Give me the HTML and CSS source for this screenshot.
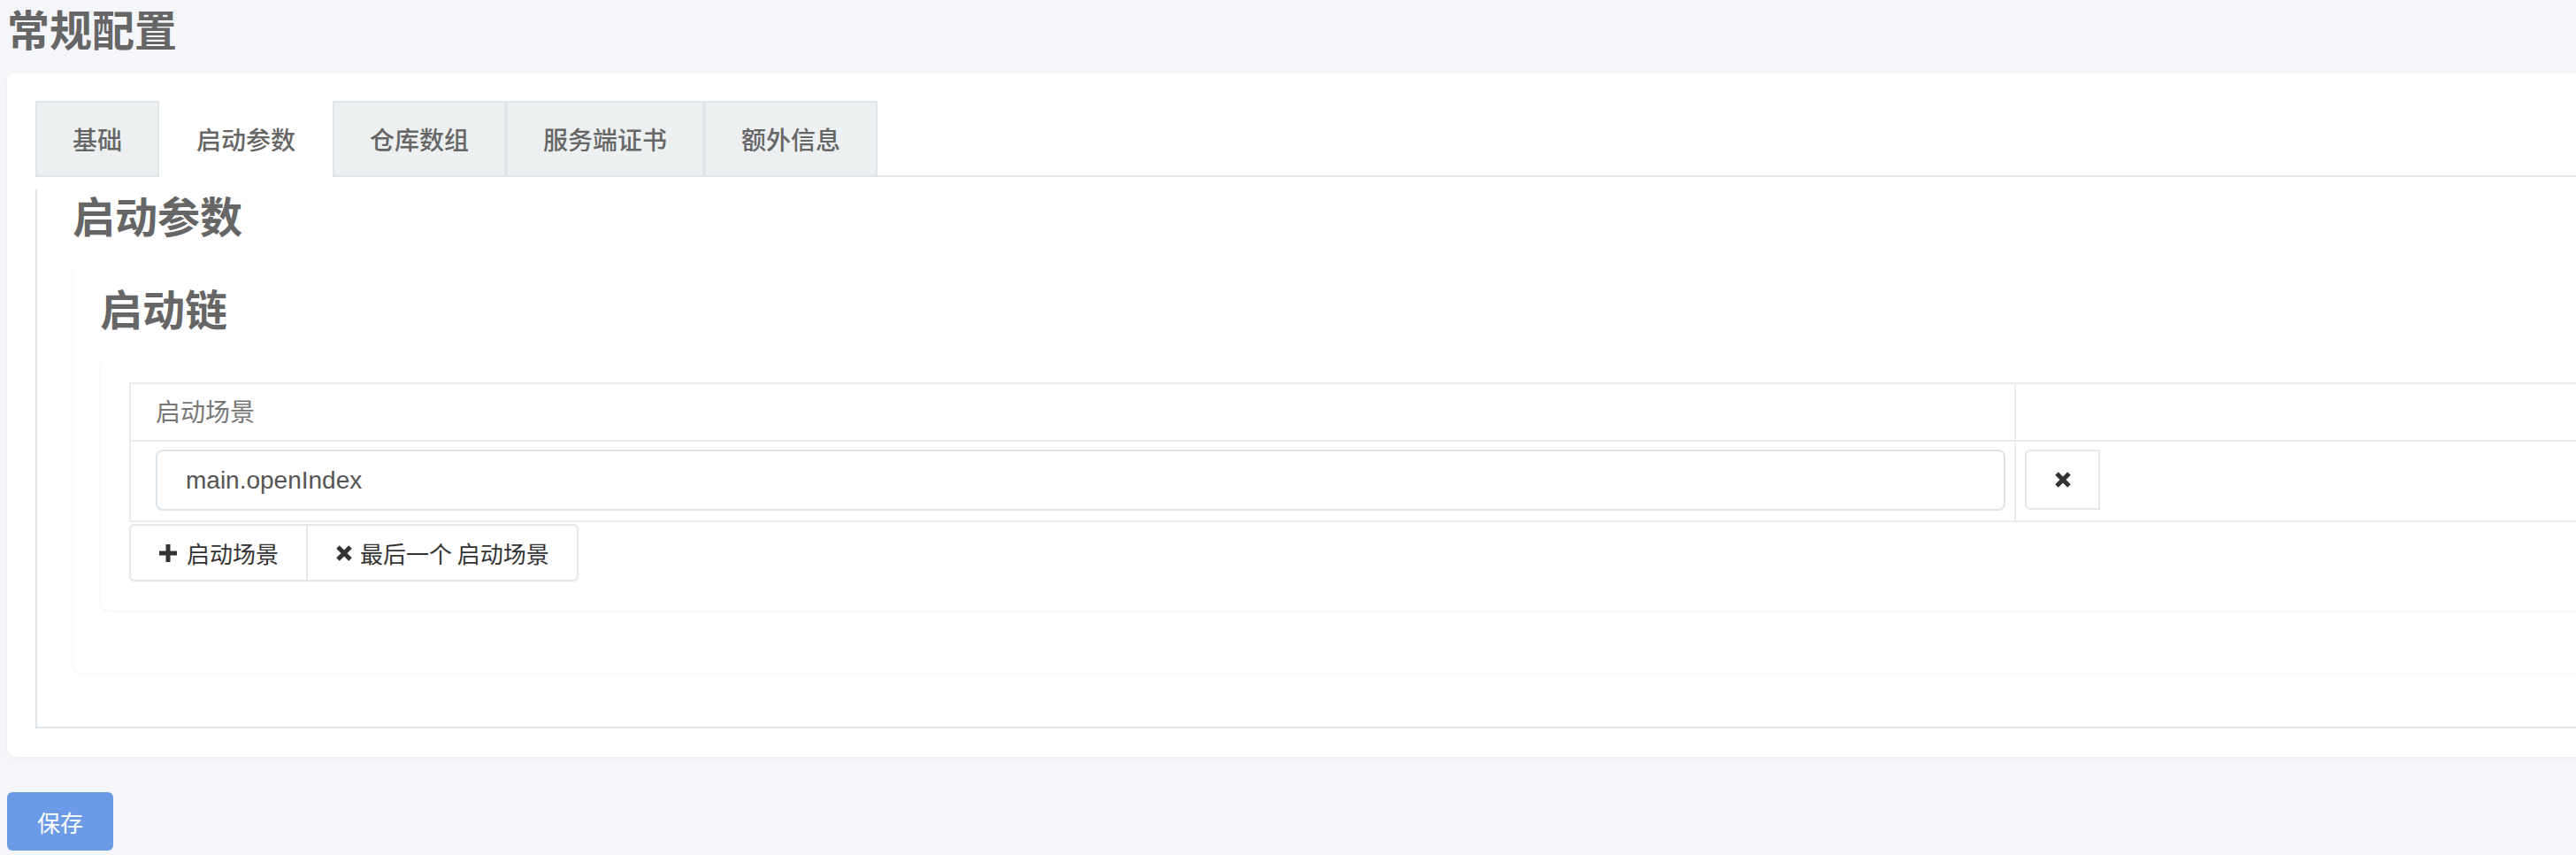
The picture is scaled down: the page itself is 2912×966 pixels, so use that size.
FILE: index.html
```html
<!DOCTYPE html>
<html lang="zh-CN">
<head>
<meta charset="utf-8">
<title>常规配置</title>
<link rel="stylesheet" href="styles.css">
</head>
<body>
<div class="page">
  <h1 class="page-title">常规配置</h1>
  <div class="main-card">
    <ul class="tab-list">
      <li class="tab">基础</li>
      <li class="tab active">启动参数</li>
      <li class="tab">仓库数组</li>
      <li class="tab">服务端证书</li>
      <li class="tab">额外信息</li>
    </ul>
    <div class="tab-panel">
      <h2 class="section-title">启动参数</h2>
      <div class="sub-card">
        <h2 class="section-title sub-title">启动链</h2>
        <div class="inner-card">
          <table class="grid">
            <colgroup>
              <col class="col-main">
              <col>
            </colgroup>
            <thead>
              <tr><th>启动场景</th><th></th></tr>
            </thead>
            <tbody>
              <tr>
                <td class="cell-input"><input class="text-input" type="text" value="main.openIndex"></td>
                <td class="cell-action">
                  <button class="del-btn" type="button">
                    <svg class="icon-x-sm" viewBox="0 0 24 24" width="24" height="24"><path d="M5 5 L19 19 M19 5 L5 19" stroke="#333" stroke-width="5" fill="none"/></svg>
                  </button>
                </td>
              </tr>
            </tbody>
          </table>
          <div class="btn-group">
            <button class="btn btn-first" type="button">
              <svg class="icon-plus" viewBox="0 0 26 26" width="26" height="26"><rect x="3" y="10.5" width="20" height="5" fill="#333"/><rect x="10.5" y="3" width="5" height="20" fill="#333"/></svg>启动场景
            </button>
            <button class="btn btn-last" type="button">
              <svg class="icon-x" viewBox="0 0 24 24" width="24" height="24"><path d="M5 5 L19 19 M19 5 L5 19" stroke="#333" stroke-width="5" fill="none"/></svg>最后一个 启动场景
            </button>
          </div>
        </div>
      </div>
    </div>
  </div>
  <button class="save-btn" type="button">保存</button>
</div>
</body>
</html>
```

FILE: styles.css
```css
html, body {
  margin: 0;
  padding: 0;
  overflow: hidden;
  background: #f5f6fa;
}

body {
  font-family: "Noto Sans CJK SC", sans-serif;
  color: #666;
}

.page {
  width: 3600px;
  box-sizing: border-box;
  padding: 3px 8px 0;
}

.page-title {
  margin: 0 0 23px;
  font-size: 48px;
  line-height: 56px;
  font-weight: 700;
  color: #666;
}

.main-card {
  background: #fff;
  border-radius: 10px;
  padding: 32px;
  box-shadow: 0 1px 3px rgba(0, 0, 0, 0.06);
}

.tab-list {
  display: flex;
  align-items: flex-start;
  list-style: none;
  margin: 0;
  padding: 0;
  border-bottom: 2px solid #dfe5e8;
}

.tab {
  height: 82px;
  line-height: 82px;
  padding: 0 40px;
  border: 2px solid #dfe5e8;
  border-bottom: 0;
  background: #ecf0f1;
  font-size: 28px;
  font-weight: 500;
  color: #666;
}

.tab.active {
  background: #fff;
  border-color: #fff;
  height: 84px;
  margin-bottom: -2px;
}

.tab-panel {
  border: 2px solid #dfe5e8;
  border-top: 0;
  padding: 0 40px 60px;
}

.section-title {
  margin: 14px 0 28px;
  font-size: 48px;
  line-height: 56px;
  font-weight: 700;
  color: #666;
}

.sub-card {
  border: 1px solid #fbfbfb;
  border-radius: 10px;
  box-shadow: 0 1px 3px rgba(0, 0, 0, 0.05);
  padding: 20px 30px 70px;
}

.sub-title {
  margin: 0 0 30px;
}

.inner-card {
  border: 1px solid #fbfbfb;
  border-radius: 10px;
  box-shadow: 0 1px 3px rgba(0, 0, 0, 0.05);
  padding: 26px 32px 32px;
}

.grid {
  width: 100%;
  table-layout: fixed;
  border-collapse: separate;
  border-spacing: 0;
  border-top: 2px solid #ebebeb;
  border-left: 2px solid #ebebeb;
}

.col-main {
  width: 2131px;
}

.grid th,
.grid td {
  border-right: 2px solid #ebebeb;
  border-bottom: 2px solid #ebebeb;
}

.grid th {
  padding: 10px 28px 13px;
  line-height: 40px;
  font-size: 28px;
  font-weight: 400;
  color: #777;
  text-align: left;
}

.cell-input {
  padding: 9px 10px 11px 28px;
}

.cell-action {
  padding: 9px 10px 11px;
  vertical-align: top;
}

.text-input {
  display: block;
  width: 100%;
  height: 69px;
  box-sizing: border-box;
  border: 2px solid #dde4ea;
  border-radius: 8px;
  padding: 0 32px;
  font-family: "Liberation Sans", Arial, sans-serif;
  font-size: 28px;
  color: #555;
  background: #fff;
  outline: none;
}

.del-btn {
  display: flex;
  align-items: center;
  justify-content: center;
  width: 85px;
  height: 68px;
  box-sizing: border-box;
  padding: 0;
  border: 2px solid #e6e6e6;
  border-radius: 6px 0 0 6px;
  background: #fff;
}

.btn-group {
  display: flex;
  margin-top: 2px;
}

.btn {
  display: flex;
  align-items: center;
  height: 65px;
  box-sizing: border-box;
  padding: 0 31px 0 29px;
  border: 2px solid #e6e6e6;
  background: #fff;
  font-family: "Noto Sans CJK SC", sans-serif;
  font-size: 26px;
  color: #333;
}

.btn-first {
  border-radius: 6px 0 0 6px;
}

.btn-last {
  margin-left: -2px;
  border-radius: 0 6px 6px 0;
}

.icon-plus {
  margin-right: 8px;
  flex: none;
}

.icon-x {
  margin-right: 6px;
  flex: none;
}

.save-btn {
  display: block;
  margin-top: 40px;
  width: 120px;
  height: 66px;
  border: 0;
  border-radius: 6px;
  background: #6b9be6;
  color: #fff;
  font-family: "Noto Sans CJK SC", sans-serif;
  font-size: 26px;
  padding: 0;
}
```
